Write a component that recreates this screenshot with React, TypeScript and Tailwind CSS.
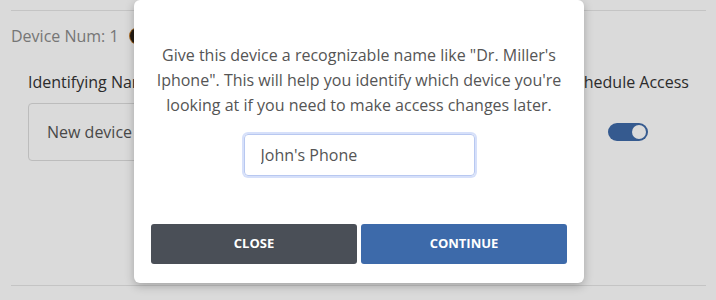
import {useState} from 'react';

export default function App() {
  const [name, setName] = useState("John's Phone");
  const [enabled] = useState(true);

  return (
    <div
      className="relative w-[716px] h-[300px] overflow-hidden bg-white"
      style={{fontFamily: '"Open Sans", "Noto Sans", sans-serif'}}
    >
      {/* page under the dialog */}
      <div className="px-[11px] pt-[10px]">
        <div className="w-[695px] border-t border-[#e6e6e6]" />
        <div className="mt-[14px] flex items-center gap-[11px] text-[16px] leading-[22px] text-[#8a8a8a]">
          <span>Device Num: 1</span>
          <span className="h-[16px] w-[16px] rounded-full bg-[#2b2118] ring-1 ring-[#c07a2a]" />
        </div>
        <div className="mt-[24px] flex pl-[17px] pr-[16px]">
          <div className="flex-1">
            <div className="text-[16px] leading-[22px] text-[#333]">Identifying Name</div>
            <div className="mt-[10px] flex h-[58px] w-[300px] items-center rounded-[4px] border border-[#dcdcdc] px-[18px] text-[16px] text-[#555]">
              New device
            </div>
          </div>
          <div className="flex flex-col items-end">
            <div className="text-[16px] leading-[22px] text-[#333]">Schedule Access</div>
            <div className="mt-[30px] mr-[41px] flex h-[18px] w-[40px] items-center justify-end rounded-full bg-[#3e6aa8] px-[2px]">
              {enabled && <span className="h-[14px] w-[14px] rounded-full bg-white" />}
            </div>
          </div>
        </div>
        <div className="mt-[124px] w-[695px] border-t border-[#e6e6e6]" />
      </div>

      {/* overlay + dialog */}
      <div className="absolute inset-0 bg-black/[0.145]">
        <div className="absolute left-[134px] top-0 w-[450px] rounded-[6px] bg-white px-[17px] pt-[43px] pb-[19px] shadow-[0_3px_10px_rgba(0,0,0,0.25)]">
          <p className="text-center text-[16px] leading-[25px] text-[#555]">
            Give this device a recognizable name like "Dr. Miller's Iphone". This will help you identify which device you're looking at if you need to make access changes later.
          </p>
          <div className="mt-[16px] flex justify-center">
            <input
              value={name}
              onChange={e => setName(e.target.value)}
              className="h-[42px] w-[231px] rounded-[4px] border border-[#b8c8f0] px-[16px] text-[16px] text-[#555] outline-none ring-2 ring-[#d6e0fa]"
            />
          </div>
          <div className="mt-[48px] flex gap-[4px]">
            <button className="h-[40px] flex-1 rounded-[3px] bg-[#4a4f57] text-[13px] font-bold uppercase text-white">
              Close
            </button>
            <button className="h-[40px] flex-1 rounded-[3px] bg-[#3d6aaa] text-[13px] font-bold uppercase text-white">
              Continue
            </button>
          </div>
        </div>
      </div>
    </div>
  );
}
